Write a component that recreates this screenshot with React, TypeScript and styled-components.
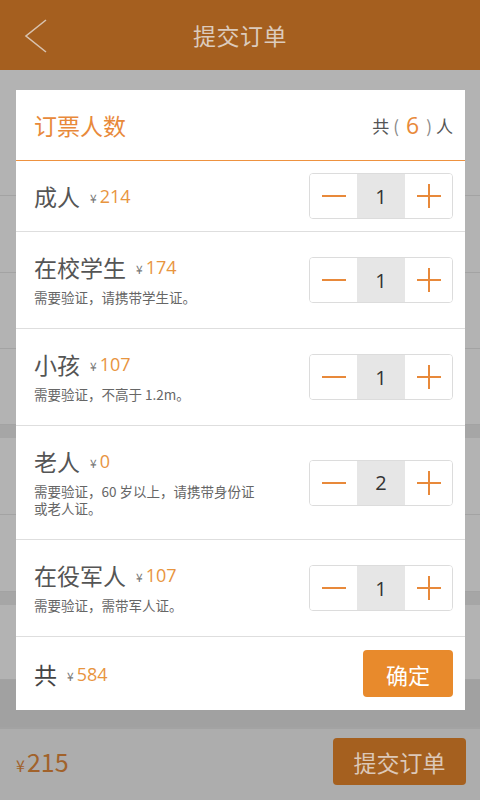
import React, { useState } from 'react';
import styled, { createGlobalStyle } from 'styled-components';

const GlobalStyle = createGlobalStyle`
  html, body {
    margin: 0;
    padding: 0;
    background: #b3b3b3;
  }
  body {
    font-family: "Noto Sans CJK SC", "Noto Sans", sans-serif;
  }
  * {
    box-sizing: border-box;
  }
`;

const Page = styled.div`
  position: relative;
  width: 480px;
  height: 800px;
  overflow: hidden;
  display: flex;
  flex-direction: column;
  background: #b3b3b3;
`;

const Header = styled.div`
  height: 70px;
  flex-shrink: 0;
  background: #a55f1f;
  display: flex;
  align-items: center;
  justify-content: center;
  position: relative;

  > .back {
    position: absolute;
    left: 24px;
    top: 19px;
  }

  > .title {
    color: #dccbbd;
    font-size: 23px;
    line-height: 30px;
    letter-spacing: 0.5px;
  }
`;

const BgRow = styled.div<{ $h: number; $tone?: string }>`
  height: ${(p) => p.$h}px;
  flex-shrink: 0;
  background: ${(p) => p.$tone || '#b3b3b3'};
  border-bottom: 1px solid #a3a3a3;
`;

const BgBand = styled.div`
  height: 13px;
  flex-shrink: 0;
  background: #a6a6a6;
`;

const BottomBar = styled.div`
  flex: 1;
  background: #adadad;
  border-top: 1px solid #a3a3a3;
  display: flex;
  align-items: center;
  justify-content: space-between;
  padding: 0 14px 0 16px;

  > .total {
    color: #a1622b;
    font-size: 25px;
    line-height: 30px;
    margin-top: -4px;

    > .yen {
      font-size: 16px;
      margin-right: 2px;
    }
  }
`;

const SubmitButton = styled.button`
  width: 133px;
  height: 47px;
  border: none;
  border-radius: 4px;
  background: #a5601f;
  color: #dcc8b8;
  font-family: inherit;
  font-size: 23px;
  padding: 0;
  margin-top: -6px;
`;

const Modal = styled.div`
  position: absolute;
  left: 16px;
  top: 90px;
  width: 449px;
  height: 620px;
  background: #fff;
  display: flex;
  flex-direction: column;
`;

const ModalHead = styled.div`
  height: 71px;
  flex-shrink: 0;
  border-bottom: 1px solid #ee9240;
  display: flex;
  align-items: center;
  justify-content: space-between;
  padding: 0 12px 0 18px;

  > .title {
    color: #e8893a;
    font-size: 23px;
    line-height: 30px;
  }

  > .count {
    color: #555;
    font-size: 17px;
    display: flex;
    align-items: center;

    > .paren {
      color: #888;
      margin: 0 4px;
    }

    > .num {
      color: #e8893a;
      font-size: 23px;
      margin: 0 3px;
      font-family: "Open Sans", sans-serif;
    }
  }
`;

const Row = styled.div`
  min-height: 71px;
  display: flex;
  align-items: center;
  justify-content: space-between;
  padding: 0 12px 0 18px;
  border-bottom: 1px solid #dedede;
`;

const Info = styled.div<{ $hasDesc: boolean }>`
  display: flex;
  flex-direction: column;
  padding: ${(p) => (p.$hasDesc ? '20px 0 22px' : '0')};

  > .desc {
    margin-top: 7px;
    color: #666;
    font-size: 13.5px;
    line-height: 17px;
    max-width: 226px;
  }
`;

const NameLine = styled.div`
  display: flex;
  align-items: center;
  height: 30px;

  > .name {
    color: #555;
    font-size: 23px;
    line-height: 30px;
  }
`;

const Price = styled.span`
  display: flex;
  align-items: baseline;
  color: #e8953f;
  font-size: 18px;
  line-height: 22px;
  margin-left: 10px;
  margin-top: 2px;
  font-family: "Open Sans", sans-serif;

  > .yen {
    color: #777;
    font-size: 12px;
    margin-right: 3px;
    font-family: "Noto Sans CJK SC", sans-serif;
  }
`;

const Stepper = styled.div`
  width: 144px;
  height: 46px;
  flex-shrink: 0;
  border: 1px solid #dcdcdc;
  border-radius: 4px;
  display: grid;
  grid-template-columns: 1fr 48px 1fr;
  overflow: hidden;
`;

const StepButton = styled.button`
  border: none;
  background: #fff;
  padding: 0;
  display: flex;
  align-items: center;
  justify-content: center;
`;

const StepValue = styled.div`
  background: #e6e6e6;
  color: #333;
  font-size: 20px;
  font-family: "Open Sans", sans-serif;
  display: flex;
  align-items: center;
  justify-content: center;
`;

const Footer = styled.div`
  flex: 1;
  display: flex;
  align-items: center;
  justify-content: space-between;
  padding: 0 12px 0 18px;

  > .sum {
    display: flex;
    align-items: center;
    color: #444;
    font-size: 23px;
    line-height: 30px;
  }
`;

const ConfirmButton = styled.button`
  width: 90px;
  height: 47px;
  border: none;
  border-radius: 4px;
  background: #e88a2c;
  color: #fff;
  font-family: inherit;
  font-size: 22px;
  padding: 0;
`;

const MinusIcon = () => (
  <svg width="26" height="26" viewBox="0 0 26 26">
    <line x1="1" y1="13" x2="25" y2="13" stroke="#e8893a" strokeWidth="2" />
  </svg>
);

const PlusIcon = () => (
  <svg width="26" height="26" viewBox="0 0 26 26">
    <line x1="1" y1="13" x2="25" y2="13" stroke="#e8893a" strokeWidth="2" />
    <line x1="13" y1="1" x2="13" y2="25" stroke="#e8893a" strokeWidth="2" />
  </svg>
);

interface Ticket {
  name: string;
  price: number;
  desc?: string;
  count: number;
}

const initialTickets: Ticket[] = [
  { name: '成人', price: 214, count: 1 },
  { name: '在校学生', price: 174, desc: '需要验证，请携带学生证。', count: 1 },
  { name: '小孩', price: 107, desc: '需要验证，不高于 1.2m。', count: 1 },
  { name: '老人', price: 0, desc: '需要验证，60 岁以上，请携带身份证或老人证。', count: 2 },
  { name: '在役军人', price: 107, desc: '需要验证，需带军人证。', count: 1 },
];

const App = () => {
  const [tickets, setTickets] = useState(initialTickets);

  const change = (idx: number, diff: number) => {
    setTickets((list) =>
      list.map((t, i) => (i === idx ? { ...t, count: Math.max(0, t.count + diff) } : t)),
    );
  };

  const people = tickets.reduce((s, t) => s + t.count, 0);

  return (
    <>
      <GlobalStyle />
      <Page>
        <Header>
          <svg className="back" width="24" height="34" viewBox="0 0 24 34">
            <polyline points="22,1 2,17 22,33" fill="none" stroke="#d8c3b0" strokeWidth="1.6" />
          </svg>
          <span className="title">提交订单</span>
        </Header>
        <BgRow $h={126} />
        <BgRow $h={77} />
        <BgRow $h={76} />
        <BgRow $h={76} />
        <BgBand />
        <BgRow $h={77} />
        <BgRow $h={77} />
        <BgBand />
        <BgRow $h={75} />
        <BgRow $h={48} $tone="#a1a1a1" />
        <BottomBar>
          <span className="total">
            <span className="yen">¥</span>215
          </span>
          <SubmitButton>提交订单</SubmitButton>
        </BottomBar>

        <Modal>
          <ModalHead>
            <span className="title">订票人数</span>
            <span className="count">
              共<span className="paren">(</span>
              <span className="num">{people}</span>
              <span className="paren">)</span>人
            </span>
          </ModalHead>
          {tickets.map((t, i) => (
            <Row key={t.name}>
              <Info $hasDesc={!!t.desc}>
                <NameLine>
                  <span className="name">{t.name}</span>
                  <Price>
                    <span className="yen">¥</span>
                    {t.price}
                  </Price>
                </NameLine>
                {t.desc && <span className="desc">{t.desc}</span>}
              </Info>
              <Stepper>
                <StepButton onClick={() => change(i, -1)}>
                  <MinusIcon />
                </StepButton>
                <StepValue>{t.count}</StepValue>
                <StepButton onClick={() => change(i, 1)}>
                  <PlusIcon />
                </StepButton>
              </Stepper>
            </Row>
          ))}
          <Footer>
            <span className="sum">
              共
              <Price>
                <span className="yen">¥</span>
                584
              </Price>
            </span>
            <ConfirmButton>确定</ConfirmButton>
          </Footer>
        </Modal>
      </Page>
    </>
  );
};

export default App;
